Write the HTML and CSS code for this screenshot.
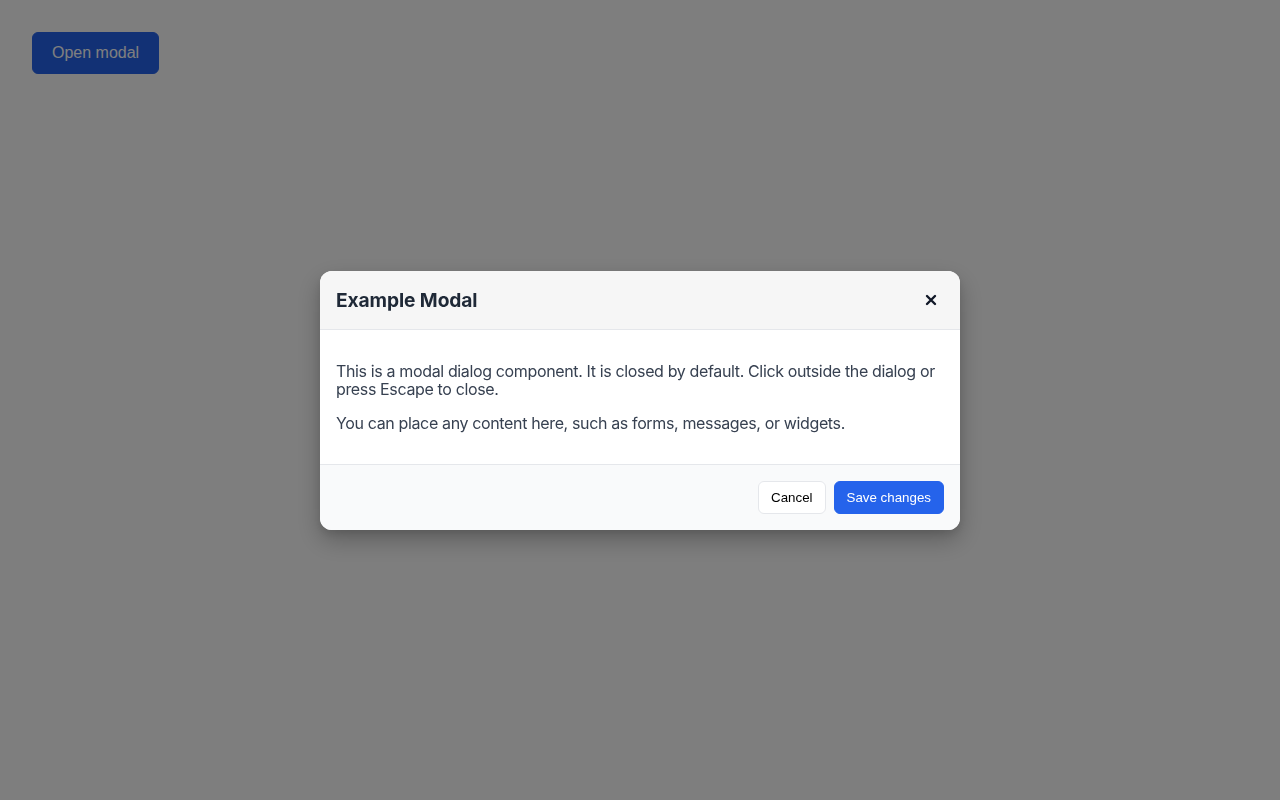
FILE: index.html
```html
<!DOCTYPE html>
<html lang="en">
<head>
    <meta charset="UTF-8">
    <meta name="viewport" content="width=device-width, initial-scale=1.0">
    <title>Modal Dialog</title>
    <link rel="stylesheet" href="styles.css">
</head>
<body>
    <div class="page">
        <button class="open-button" id="openButton">Open modal</button>
    </div>

    <div class="backdrop" id="backdrop">
        <div class="modal" role="dialog" aria-labelledby="modalTitle">
            <div class="modal-header">
                <h2 id="modalTitle" class="modal-title">Example Modal</h2>
                <button class="close-button" aria-label="Close">
                    <svg width="12" height="12" viewBox="0 0 12 12">
                        <path d="M2 2 L10 10 M10 2 L2 10" stroke="#111827" stroke-width="2.4" stroke-linecap="round"/>
                    </svg>
                </button>
            </div>
            <div class="modal-body">
                <p>This is a modal dialog component. It is closed by default. Click outside the dialog or press Escape to close.</p>
                <p>You can place any content here, such as forms, messages, or widgets.</p>
            </div>
            <div class="modal-footer">
                <button class="button cancel-button">Cancel</button>
                <button class="button save-button">Save changes</button>
            </div>
        </div>
    </div>
</body>
</html>
```

FILE: styles.css
```css
body { margin: 0; font-family: Inter, "Noto Sans", sans-serif; background-color: #fdfdfd; color: #374151; }
.page { padding: 32px; }
.open-button { padding: 10px 19px; font-family: "Liberation Sans", Arial, sans-serif; font-size: 16px; line-height: 20px; color: white; background-color: #2563eb; border: 1px solid #2563eb; border-radius: 6px; cursor: pointer; }

.backdrop { position: fixed; inset: 0; background-color: rgba(0, 0, 0, 0.5); display: flex; align-items: center; justify-content: center; }
.modal { width: 640px; background-color: white; border-radius: 12px; overflow: hidden; box-shadow: 0 10px 25px rgba(0, 0, 0, 0.25), 0 4px 10px rgba(0, 0, 0, 0.1); }

.modal-header { display: flex; align-items: center; justify-content: space-between; padding: 16px; background-color: #f6f6f6; border-bottom: 1px solid #e5e7eb; }
.modal-title { margin: 0; font-size: 19.2px; line-height: 26px; font-weight: 700; letter-spacing: -0.1px; color: #1f2937; }
.close-button { display: flex; align-items: center; justify-content: center; width: 26px; height: 26px; padding: 0; background: none; border: none; cursor: pointer; }

.modal-body { padding: 16px; font-size: 16px; line-height: 18px; letter-spacing: -0.36px; color: #374151; }
.modal-body p { margin: 16px 0; }

.modal-footer { display: flex; justify-content: flex-end; gap: 8px; padding: 16px; background-color: #f9fafb; border-top: 1px solid #e5e7eb; }
.button { padding: 8px 12px; font-family: "Liberation Sans", Arial, sans-serif; font-size: 13.33px; line-height: 15px; border-radius: 6px; cursor: pointer; }
.cancel-button { background-color: white; color: black; border: 1px solid #e5e7eb; }
.save-button { background-color: #2563eb; color: white; border: 1px solid #2563eb; }
```
